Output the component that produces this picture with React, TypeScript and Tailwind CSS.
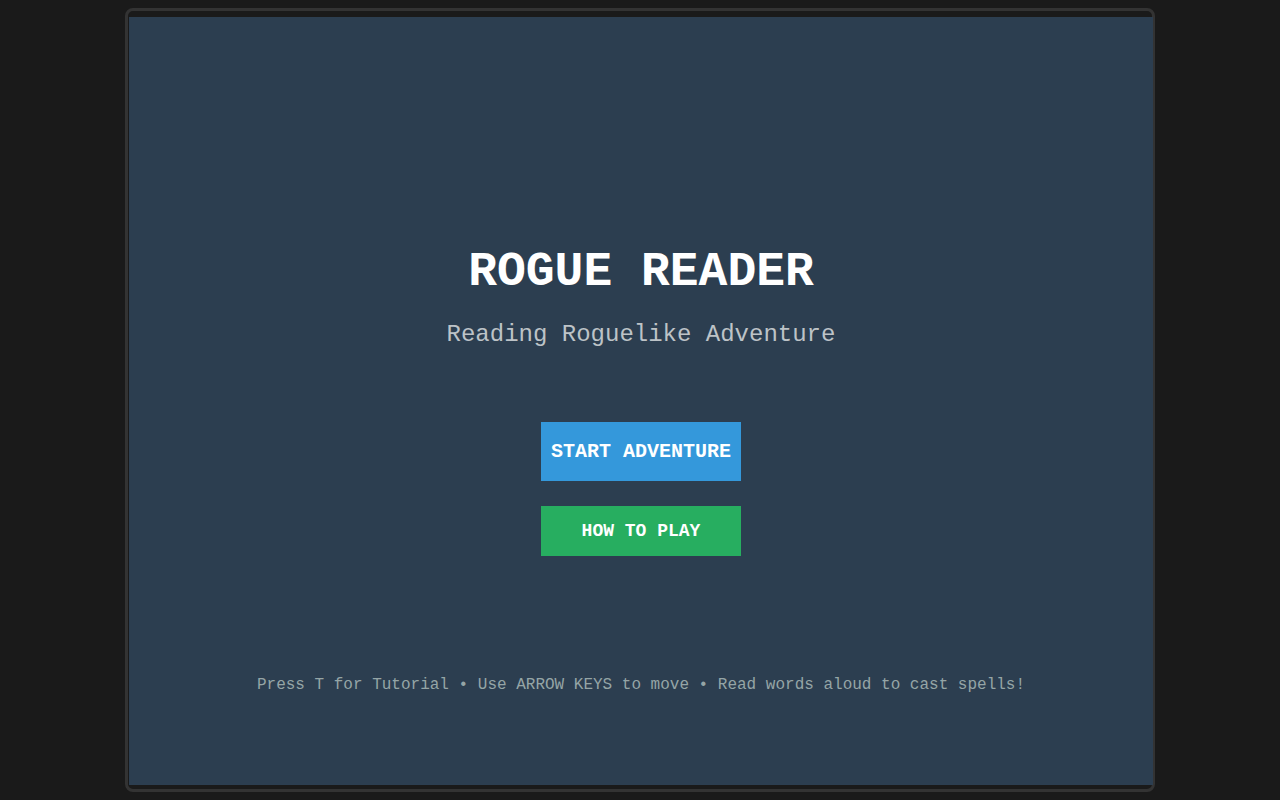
export default function App() {
  return (
    <div className="min-h-screen w-full bg-[#1a1a1a] flex justify-center pt-[8px] font-['Liberation_Mono',monospace]">
      {/* Game frame */}
      <div className="w-[1030px] h-[784px] rounded-lg border-[3px] border-[#333333] pt-[6px] px-px">
        <div className="w-[1024px] h-[768px] bg-[#2c3e50] flex flex-col items-center pt-[227px]">
          <h1 className="text-[48px] leading-[56px] font-bold text-white">ROGUE READER</h1>
          <p className="mt-[19px] text-[24px] leading-[32px] text-[#bdc3c7]">Reading Roguelike Adventure</p>

          <button className="mt-[71px] w-[200px] h-[59px] bg-[#3498db] text-white text-[20px] font-bold">
            START ADVENTURE
          </button>
          <button className="mt-[25px] w-[200px] h-[50px] bg-[#27ae60] text-white text-[18px] font-bold">
            HOW TO PLAY
          </button>

          <p className="mt-[117px] text-[16px] leading-[24px] text-[#95a5a6]">
            Press T for Tutorial • Use ARROW KEYS to move • Read words aloud to cast spells!
          </p>
        </div>
      </div>
    </div>
  );
}
